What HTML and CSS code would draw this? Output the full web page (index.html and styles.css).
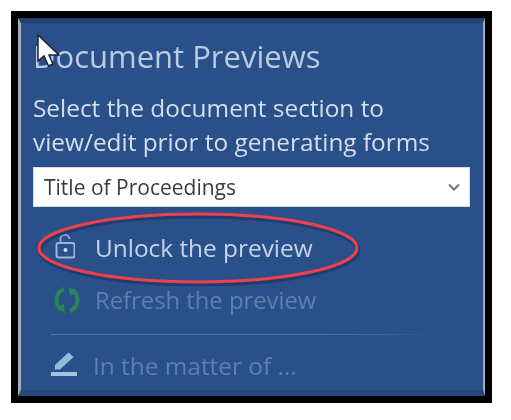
FILE: index.html

```html
<!DOCTYPE html>
<html lang="en">
<head>
  <meta charset="UTF-8">
  <title>Document Previews</title>
  <link rel="stylesheet" href="styles.css">
</head>
<body>
  <div class="frame">
    <div class="panel">
      <h2 class="title">Document Previews</h2>
      <p class="intro">Select the document section to<br>view/edit prior to generating forms</p>
      <div class="select">
        <span>Title of Proceedings</span>
        <svg class="chevron" width="12" height="8" viewBox="0 0 12 8"><path d="M1 1.5 6 6.5 11 1.5" fill="none" stroke="#6f7278" stroke-width="2"/></svg>
      </div>
      <div class="action unlock">
        <svg class="icon" width="22" height="26" viewBox="0 0 22 26"><path d="M7.500 9V5.500a4.500 4.500 0 0 1 9 -.5" fill="none" stroke="#8fa8cf" stroke-width="2"/><rect x="3.500" y="9" width="18" height="14.500" rx="2" fill="none" stroke="#9fb6da" stroke-width="2"/><circle cx="12.500" cy="16" r="2" fill="#d5e0f0"/></svg>
        <span>Unlock the preview</span>
      </div>
      <div class="action refresh">
        <svg class="icon" width="28" height="28" viewBox="0 0 28 28"><path d="M11 3C2.500 6 1 18 8 24" fill="none" stroke="#2b8458" stroke-width="4"/><path d="M17 25C25.500 22 27 10 20 4" fill="none" stroke="#2b8458" stroke-width="4"/><path d="M3 22 12 27 11 18Z" fill="#2b8458"/><path d="M25 6 16 1 17 10Z" fill="#2b8458"/></svg>
        <span>Refresh the preview</span>
      </div>
      <hr class="rule">
      <div class="action matter">
        <svg class="icon" width="28" height="26" viewBox="0 0 28 26"><path d="M5 17.500V13L18.500 .5 23.500 5 10 17.500Z" fill="#93bcd9"/><rect x="1" y="20" width="26" height="4" fill="#a3c4de"/></svg>
        <span>In the matter of ...</span>
      </div>
    </div>
    <svg class="ring" width="328" height="76" viewBox="0 0 328 76"><ellipse cx="164" cy="38" rx="159" ry="34" fill="none" stroke="#1c2f5c" stroke-opacity=".6" stroke-width="5" transform="translate(1 2)"/><ellipse cx="164" cy="38" rx="159" ry="34" fill="none" stroke="#f0404e" stroke-width="3"/></svg>
    <svg class="cursor" width="26" height="36" viewBox="0 0 26 36"><path d="M2 2V28L8 23 12.500 33 17 31 13 22H23Z" fill="#fff" stroke="#1b2233" stroke-width="1.500"/></svg>
  </div>
</body>
</html>
```

FILE: styles.css

```css
html, body { margin: 0; background: #fff; }
body { width: 511px; height: 420px; overflow: hidden; padding: 11px 19px 17px 11px; box-sizing: border-box; font-family: "Open Sans", sans-serif; }
.frame { position: relative; height: 392px; box-sizing: border-box; background: #000; padding: 7px; filter: blur(.6px); }
.panel { height: 378px; box-sizing: border-box; background: #2a5089; border-left: 3px solid #a5adb4; border-right: 2px solid #a0a9b8; border-top: 5px solid #24426f; border-bottom: 6px solid #27467a; padding: 15px 13px 0 12px; color: #dfe6f0; }
.title { margin: 0; font-size: 31px; line-height: 37px; font-weight: 400; color: #bccbe0; white-space: nowrap; }
.intro { margin: 16px 0 0; font-size: 24.400px; line-height: 34px; color: #d5deeb; white-space: nowrap; }
.select { display: flex; align-items: center; justify-content: space-between; height: 40px; box-sizing: border-box; margin-top: 8px; padding: 0 9px 0 10px; background: #fff; border: 1px solid #d8dde6; color: #3a3a44; font-size: 21px; }
.action { display: flex; align-items: center; height: 48px; padding-left: 20px; font-size: 24.400px; white-space: nowrap; }
.action .icon { flex: none; margin-right: 20px; }
.unlock { margin-top: 16px; color: #c5d4ea; }
.refresh { height: 40px; margin-top: 9px; font-size: 23.800px; color: #5f7eb0; }
.refresh .icon { margin-right: 14px; }
.rule { margin: 14px 30px 0 18px; border: 0; height: 1px; background: linear-gradient(to right, #4f73a8 70%, #2a5089); }
.matter { margin-top: 6px; padding-left: 17px; color: #5f7eb0; }
.matter .icon { margin-right: 15px; }
.ring { position: absolute; left: 23px; top: 199px; }
.cursor { position: absolute; left: 25px; top: 22px; }
```
